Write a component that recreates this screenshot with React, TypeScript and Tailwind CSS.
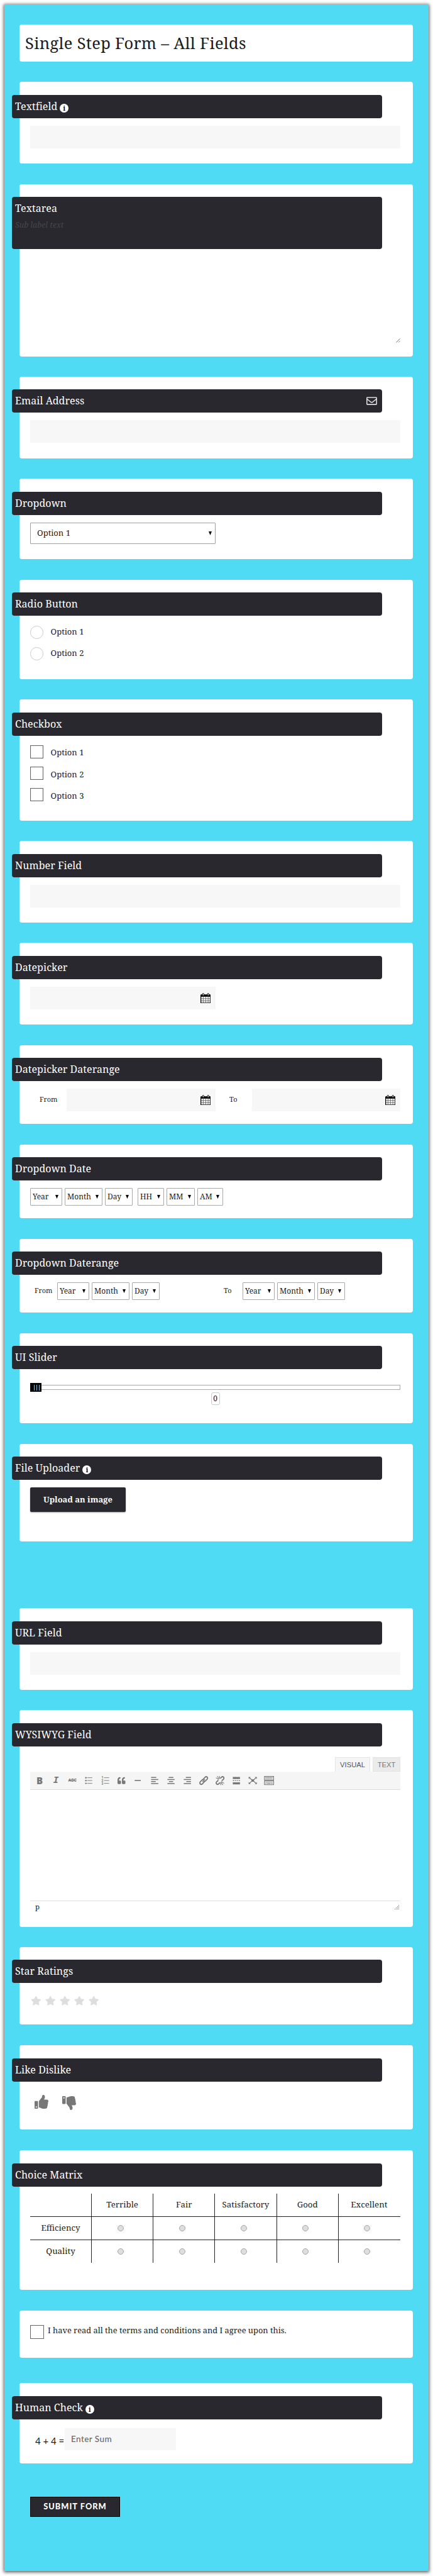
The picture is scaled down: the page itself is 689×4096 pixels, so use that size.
import React, { type ReactNode } from "react";
import { FaRegEnvelope, FaStar, FaThumbsUp, FaQuoteLeft } from "react-icons/fa";

function InfoBadge() {
  return (
    <span className="mt-[5px] ml-1 flex size-[14px] items-center justify-center rounded-full bg-white text-[10px] leading-none font-bold text-black">
      i
    </span>
  );
}

function Card({
  title,
  info,
  icon,
  sub,
  className,
  children,
}: {
  title?: string;
  info?: boolean;
  icon?: ReactNode;
  sub?: string;
  className: string;
  children?: ReactNode;
}) {
  return (
    <section className={`ml-6 w-[626px] shrink-0 rounded-[4px] bg-white ${className}`}>
      {title && (
        <header
          className={`-ml-3 w-[589px] rounded-[4px] bg-[#29282e] px-[5px] text-white ${sub ? "h-[83px]" : "h-[37px]"}`}
        >
          <div className="flex h-[36px] items-center text-[16px] leading-none tracking-[0.06px]">
            <span>{title}</span>
            {info && <InfoBadge />}
            {icon && <span className="mr-[3px] ml-auto">{icon}</span>}
          </div>
          {sub && <div className="text-[12.4px] leading-[18px] text-[#45454a] italic">{sub}</div>}
        </header>
      )}
      <div className="ml-[17px] w-[589px]">{children}</div>
    </section>
  );
}

function Field() {
  return <div className="mt-3 h-9 w-full bg-[#f7f7f7]" />;
}

function Arrow() {
  return (
    <svg viewBox="0 0 5 6" className="h-[6px] w-[5px] shrink-0">
      <path d="M0 0h5L2.5 6z" fill="#000" />
    </svg>
  );
}

function Select({ label, className }: { label: string; className: string }) {
  return (
    <div
      className={`flex h-7 shrink-0 items-center justify-between rounded-[1px] border border-[#a9a9a9] pr-[5px] pl-[3px] text-[12px] ${className}`}
    >
      <span>{label}</span>
      <Arrow />
    </div>
  );
}

function CalendarIcon() {
  return (
    <svg viewBox="0 0 20 20" className="size-[16.5px]">
      <rect x="0.8" y="3.6" width="18.4" height="15.6" rx="1" fill="#fff" stroke="#000" strokeWidth="1.6" />
      <path d="M0 3.5h20v3.6H0z" fill="#000" />
      <path d="M5.3 7v12M10 7v12M14.7 7v12M1 10.8h18M1 15h18" stroke="#555" strokeWidth="1" />
      <rect x="3.8" y="0.6" width="2.8" height="4.6" rx="1.4" fill="#ddd" stroke="#000" strokeWidth="1.1" />
      <rect x="13.4" y="0.6" width="2.8" height="4.6" rx="1.4" fill="#ddd" stroke="#000" strokeWidth="1.1" />
    </svg>
  );
}

function DateField({ className }: { className: string }) {
  return (
    <div className={`flex h-9 items-center justify-end bg-[#f7f7f7] pr-2 ${className}`}>
      <CalendarIcon />
    </div>
  );
}

function Tool({ children }: { children: ReactNode }) {
  return (
    <span className="flex w-[26.1px] items-center justify-center text-[#777]">
      <svg viewBox="0 0 20 20" className="size-[16.3px]" stroke="currentColor" fill="none">
        {children}
      </svg>
    </span>
  );
}

function Toolbar() {
  return (
    <div className="flex h-[29px] border-b border-[#dadada] bg-[#f5f5f5] pl-[2px]">
      <span className="flex w-[26.1px] items-center justify-center font-['Open_Sans'] text-[15px] font-extrabold text-[#777]">
        B
      </span>
      <span className="flex w-[26.1px] items-center justify-center font-['DejaVu_Sans_Mono'] text-[14.5px] font-bold text-[#777] italic">
        I
      </span>
      <span className="flex w-[26.1px] items-center justify-center font-['Open_Sans'] text-[6.5px] font-bold text-[#777] line-through">
        ABC
      </span>
      <Tool>
        <path d="M7 4.5h10M7 10h10M7 15.5h10" strokeWidth="1.1" />
        <path d="M3 4.5h3M3 10h3M3 15.5h3" strokeWidth="2.4" />
      </Tool>
      <Tool>
        <path d="M8 4.5h10M8 10h10M8 15.5h10" strokeWidth="1.1" />
        <g fill="currentColor" stroke="none" fontSize="6" fontWeight="700" fontFamily="Open Sans">
          <text x="3" y="6">1</text>
          <text x="3" y="12">2</text>
          <text x="3" y="18">3</text>
        </g>
      </Tool>
      <span className="flex w-[26.1px] items-center justify-center text-[#777]">
        <FaQuoteLeft className="size-[12.5px]" />
      </span>
      <Tool>
        <path d="M4 10h12" strokeWidth="2" />
      </Tool>
      <Tool>
        <path d="M3 4h10M3 8h14M3 12h9M3 16h14" strokeWidth="2" />
      </Tool>
      <Tool>
        <path d="M5.5 4h9M3 8h14M6 12h8M3 16h14" strokeWidth="2" />
      </Tool>
      <Tool>
        <path d="M7 4h10M3 8h14M8 12h9M3 16h14" strokeWidth="2" />
      </Tool>
      <Tool>
        <g strokeWidth="2.2">
          <path d="M8.5 8l4-4.3c1.5-1.5 3.3-1.2 4.3-.3s1.2 2.8-.2 4.2l-3.3 3.3c-1 .9-2.2 1-3.2.5" />
          <path d="M11.5 12l-4 4.3c-1.5 1.5-3.3 1.2-4.3.3s-1.2-2.8.2-4.2l3.3-3.3c1-.9 2.2-1 3.2-.5" />
          <path d="M7.5 12.5l5-5" strokeWidth="1.6" />
        </g>
      </Tool>
      <Tool>
        <path
          d="M10.5 6l2-2.3c1.5-1.5 3.3-1.2 4.3-.3s1.2 2.8-.2 4.2l-3.3 2.900M9.5 14l-2 2.3c-1.5 1.5-3.3 1.2-4.3.3s-1.2-2.8.2-4.2l3.3-2.9"
          strokeWidth="2.2"
        />
        <path
          d="M2 4.5l5.5 3.5M4.5 1.5l4 5.5M8.5 1l1 5M18 15.5l-5.5-3.5M15.5 18.5l-4-5.5M11.5 19l-1-5"
          strokeWidth="1.3"
        />
      </Tool>
      <Tool>
        <path d="M3 5h14M3 15.5h14" strokeWidth="4" />
        <path d="M3 10.2h3M7.5 10.2h2.2M11 10.2h2M14.5 10.2h2.5" strokeWidth="1.6" />
      </Tool>
      <Tool>
        <path d="M4 5l4 3.5M16 5l-4 3.5M4 15l4-3.5M16 15l-4-3.5" strokeWidth="1.5" />
        <path
          d="M7.5 7.8h5v4.4h-5zM2 3h4L2 7zM18 3h-4l4 4zM2 17h4l-4-4zM18 17h-4l4-4z"
          fill="currentColor"
          stroke="none"
        />
      </Tool>
      <Tool>
        <path d="M1 2h18v7.2H1zM1 10.8h18V18H1z" strokeWidth="1.3" />
        <path d="M3 4.5h14M3 7h14M3 13.2h14" strokeWidth="1.4" strokeDasharray="1.8 0.7" />
        <path d="M3 15.7h2M6 15.7h7M14 15.7h3" strokeWidth="1.4" />
      </Tool>
    </div>
  );
}

function CheckRow({ label }: { label: string }) {
  return (
    <div className="flex h-[34.4px] items-center">
      <span className="size-[21px] border border-[#666] shadow-[inset_0_0_2px_#ddd]" />
      <span className="mt-1 ml-[11.5px] text-[13px]">{label}</span>
    </div>
  );
}

const columns = ["Terrible", "Fair", "Satisfactory", "Good", "Excellent"];

function MatrixRow({ label, last }: { label: string; last?: boolean }) {
  return (
    <div className={`grid h-[36.5px] grid-cols-[97px_repeat(5,98.2px)] ${last ? "" : "border-b border-[#222]"}`}>
      <div className="flex items-center justify-center text-[13.3px]">{label}</div>
      {columns.map((c) => (
        <div key={c} className="flex items-center justify-center border-l border-[#222] pr-[6px]">
          <span className="size-[10px] rounded-full border border-[#a5a5a5] bg-[#dedede]" />
        </div>
      ))}
    </div>
  );
}

export default function App() {
  return (
    <div className="flex h-[4096px] w-[689px] flex-col overflow-hidden bg-white font-['Noto_Serif','DejaVu_Serif_Condensed','DejaVu_Serif',serif] text-[#1b1b1b]">
      <main className="mt-[7px] ml-[7px] flex h-[4081px] w-[675px] flex-col items-start bg-[#50dbf5] shadow-[0_1px_5px_1px_rgba(0,0,0,0.65)]">
        <div className="mt-8 ml-6 flex h-[59px] w-[626px] shrink-0 items-center rounded-[4px] bg-white pl-[9px]">
          <h1 className="text-[25.5px] leading-none tracking-[0.33px]">Single Step Form – All Fields</h1>
        </div>

        <Card title="Textfield" info className="mt-8 h-[130px] pt-[21px]">
          <Field />
        </Card>

        <Card title="Textarea" sub="Sub label text" className="mt-[33px] h-[274px] pt-5">
          <div className="flex h-[149px] items-end justify-end">
            <svg viewBox="0 0 7 7" className="size-[7px]" stroke="#555" strokeWidth="0.8">
              <path d="M0.5 6.5l6-6M4 6.5l2.5-2.5" />
            </svg>
          </div>
        </Card>

        <Card
          title="Email Address"
          icon={<FaRegEnvelope className="size-[17px] text-[#dcdcdc]" />}
          className="mt-8 h-[130px] pt-5"
        >
          <Field />
        </Card>

        <Card title="Dropdown" className="mt-8 h-[128px] pt-[21px]">
          <div className="mt-3 flex h-[34px] w-[295px] items-center justify-between rounded-[1px] border border-[#a0a0a0] pr-[5px] pl-[10px] text-[13px]">
            <span>Option 1</span>
            <Arrow />
          </div>
        </Card>

        <Card title="Radio Button" className="mt-[33px] h-[158px] pt-5">
          <div className="pt-[9px]">
            {["Option 1", "Option 2"].map((o) => (
              <div key={o} className="flex h-[34px] items-center">
                <span className="size-[21px] rounded-full border border-[#c8cbce]" />
                <span className="ml-[11.5px] text-[13px]">{o}</span>
              </div>
            ))}
          </div>
        </Card>

        <Card title="Checkbox" className="mt-8 h-[193px] pt-[21px]">
          <div className="pt-2">
            <CheckRow label="Option 1" />
            <CheckRow label="Option 2" />
            <CheckRow label="Option 3" />
          </div>
        </Card>

        <Card title="Number Field" className="mt-8 h-[130px] pt-[21px]">
          <Field />
        </Card>

        <Card title="Datepicker" className="mt-8 h-[130px] pt-[21px]">
          <DateField className="mt-3 w-[295px]" />
        </Card>

        <Card title="Datepicker Daterange" className="mt-[33px] h-[125px] pt-5">
          <div className="mt-3 flex text-[11px]">
            <span className="w-[58px] pl-[15px] leading-[33px]">From</span>
            <DateField className="w-[237px]" />
            <span className="w-[58px] pl-[22px] leading-[33px]">To</span>
            <DateField className="w-[236px]" />
          </div>
        </Card>

        <Card title="Dropdown Date" className="mt-[33px] h-[117px] pt-5">
          <div className="mt-3 flex gap-1">
            <Select label="Year" className="w-[51px]" />
            <Select label="Month" className="w-[60px]" />
            <Select label="Day" className="mr-1 w-[44px]" />
            <Select label="HH" className="w-[42px]" />
            <Select label="MM" className="w-[45px]" />
            <Select label="AM" className="w-[41px]" />
          </div>
        </Card>

        <Card title="Dropdown Daterange" className="mt-[33px] h-[117px] pt-5">
          <div className="mt-3 flex gap-1">
            <span className="w-[39px] pl-[7px] text-[11px] leading-[26px]">From</span>
            <Select label="Year" className="w-[51px]" />
            <Select label="Month" className="w-[60px]" />
            <Select label="Day" className="w-[44px]" />
            <span className="ml-[98px] w-[26px] text-[11px] leading-[26px]">To</span>
            <Select label="Year" className="w-[51px]" />
            <Select label="Month" className="w-[60px]" />
            <Select label="Day" className="w-[44px]" />
          </div>
        </Card>

        <Card title="UI Slider" className="mt-[33px] h-[143px] pt-5">
          <div className="mt-[22px] flex h-[14px] items-center">
            <div className="flex h-[14px] w-[18px] items-center justify-center gap-[3px] bg-black pl-[3px]">
              <span className="h-[9px] w-px bg-[#8fc0d8]" />
              <span className="h-[9px] w-px bg-[#8fc0d8]" />
              <span className="h-[9px] w-px bg-[#8fc0d8]" />
            </div>
            <div className="h-[8px] flex-1 border border-l-0 border-[#aaa]" />
          </div>
          <div className="mx-auto mt-px flex h-5 w-[14px] items-center justify-center rounded-[3px] border border-[#ccc] text-[12px] leading-none">
            0
          </div>
        </Card>

        <Card title="File Uploader" info className="mt-[33px] h-[155px] pt-5">
          <button className="mt-3 block h-[39px] w-[152px] rounded-[2px] bg-[#29282e] text-[13px] font-bold whitespace-nowrap text-white shadow-[0_1px_2px_rgba(0,0,0,0.4)]">
            Upload an image
          </button>
        </Card>

        <Card title="URL Field" className="mt-[106px] h-[130px] pt-[21px]">
          <Field />
        </Card>

        <Card title="WYSIWYG Field" className="mt-8 h-[345px] pt-[21px]">
          <div className="flex justify-end gap-1 pt-[17px] font-['Liberation_Sans',sans-serif] text-[11.2px] leading-[22px] text-[#777]">
            <span className="h-[23px] w-[56px] border border-b-0 border-[#e5e5e5] bg-[#f5f5f5] text-center text-[#555]">
              VISUAL
            </span>
            <span className="h-[23px] w-[44px] border border-[#e2e2e2] bg-[#ebebeb] text-center">TEXT</span>
          </div>
          <Toolbar />
          <div className="flex h-[191px] flex-col justify-end">
            <div className="flex h-[15px] items-start justify-between border-t border-[#dedede] pr-[2px] pl-2 text-[11.5px] leading-[18px] text-[#1a1a3a]">
              <span>p</span>
              <svg viewBox="0 0 8 8" className="mt-[6px] size-2 shrink-0" fill="#777">
                <path d="M7 0h1v1H7zM7 2h1v1H7zM5 2h1v1H5zM7 4h1v1H7zM5 4h1v1H5zM3 4h1v1H3zM7 6h1v1H7zM5 6h1v1H5zM3 6h1v1H3zM1 6h1v1H1z" />
              </svg>
            </div>
          </div>
        </Card>

        <Card title="Star Ratings" className="mt-8 h-[123px] pt-5">
          <div className="flex gap-[6.6px] pt-5 pl-[1px] text-[#dedede]">
            {[1, 2, 3, 4, 5].map((n) => (
              <FaStar key={n} className="size-[16.5px]" />
            ))}
          </div>
        </Card>

        <Card title="Like Dislike" className="mt-[33px] h-[134px] pt-[21px]">
          <div className="flex gap-[22px] pt-[21px] pl-[7px] text-[#777]">
            <FaThumbsUp className="size-[22px]" />
            <FaThumbsUp className="mt-[2px] size-[22px] -scale-y-100" />
          </div>
        </Card>

        <Card title="Choice Matrix" className="mt-[33px] h-[222px] pt-[21px]">
          <div className="mt-[11px]">
            <div className="grid h-[37px] grid-cols-[97px_repeat(5,98.2px)] border-b border-[#222] text-[13.3px]">
              <div />
              {columns.map((c) => (
                <div key={c} className="flex items-center justify-center border-l border-[#222]">
                  {c}
                </div>
              ))}
            </div>
            <MatrixRow label="Efficiency" />
            <MatrixRow label="Quality" last />
          </div>
        </Card>

        <Card className="mt-[33px] h-[75px] pt-[23px]">
          <div className="flex items-start">
            <span className="size-[22px] border border-[#666]" />
            <span className="ml-[6px] text-[12.85px] leading-[16px]">
              I have read all the terms and conditions and I agree upon this.
            </span>
          </div>
        </Card>

        <Card title="Human Check" info className="mt-10 h-[128px] pt-[21px]">
          <div className="mt-[14px] flex font-['Lato',sans-serif]">
            <span className="w-[55px] pl-2 text-[15px] leading-[41px] whitespace-nowrap">4 + 4 =</span>
            <span className="h-[35px] w-[177px] bg-[#f7f7f7] pl-[10px] text-[13.5px] leading-[35px] font-medium tracking-[0.45px] text-[#6a6a6a]">
              Enter Sum
            </span>
          </div>
        </Card>

        <button className="mt-[53px] ml-[41px] block h-8 w-[143px] shrink-0 border border-black bg-[#29282e] font-['Lato',sans-serif] text-[12.8px] font-black tracking-[1px] whitespace-nowrap text-white">
          SUBMIT FORM
        </button>
      </main>
    </div>
  );
}
